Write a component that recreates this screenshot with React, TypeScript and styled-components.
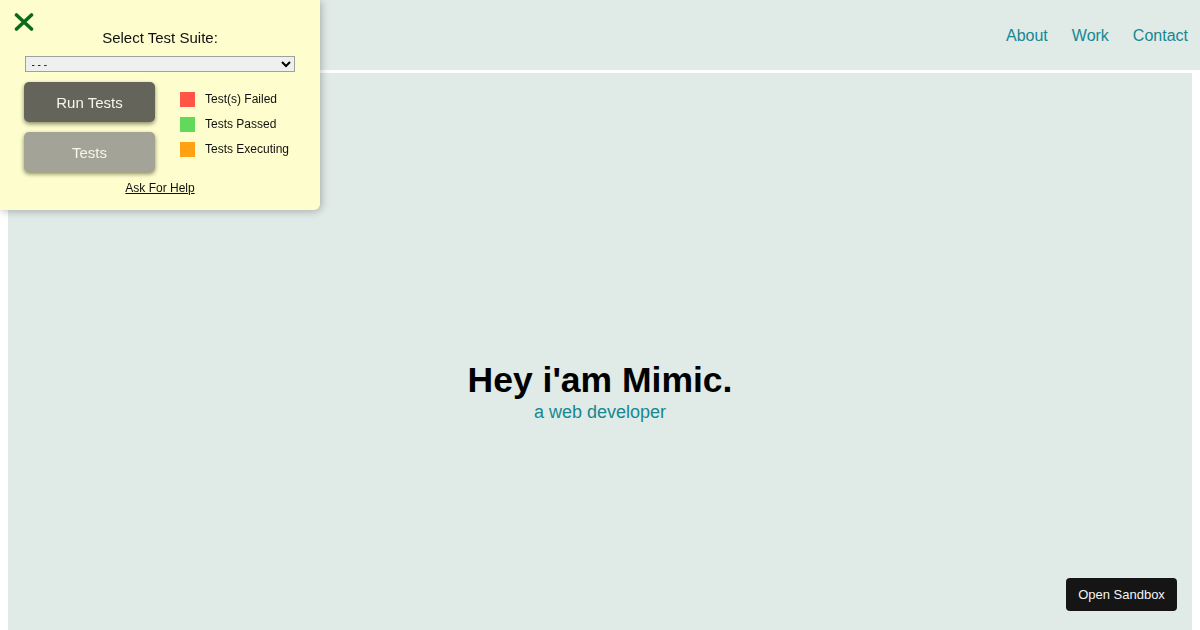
import React from "react"
import styled, { createGlobalStyle } from "styled-components"

const GlobalStyle = createGlobalStyle`
  html, body {
    margin: 0;
    padding: 0;
    background: #ffffff;
    font-family: "Liberation Sans", Arial, sans-serif;
    overflow: hidden;
  }
`

const legend = [
  { label: "Test(s) Failed", color: "#ff5447" },
  { label: "Tests Passed", color: "#62d95b" },
  { label: "Tests Executing", color: "#ffa113" },
]

export default function App() {
  return (
    <>
      <GlobalStyle />
      <StyledHeader>
        <StyledNav>
          <a href="#">About</a>
          <a href="#">Work</a>
          <a href="#">Contact</a>
        </StyledNav>
      </StyledHeader>
      <StyledMain>
        <h1>Hey i'am Mimic.</h1>
        <p>a web developer</p>
      </StyledMain>

      <StyledPanel>
        <StyledClose aria-label="close">
          <svg width="20" height="18" viewBox="0 0 20 18">
            <path d="M2.5 2 L17.5 16 M17.5 2 L2.5 16" stroke="#0c6a1c" strokeWidth="3.6" strokeLinecap="round" />
          </svg>
        </StyledClose>
        <StyledTitle>Select Test Suite:</StyledTitle>
        <StyledSelect defaultValue="none">
          <option value="none">- - -</option>
        </StyledSelect>
        <StyledBody>
          <StyledButtons>
            <StyledButton $dark>Run Tests</StyledButton>
            <StyledButton>Tests</StyledButton>
          </StyledButtons>
          <StyledLegend>
            {legend.map((item) => (
              <li key={item.label}>
                <StyledSwatch $color={item.color} />
                {item.label}
              </li>
            ))}
          </StyledLegend>
        </StyledBody>
        <StyledHelp href="#">Ask For Help</StyledHelp>
      </StyledPanel>

      <StyledSandbox>Open Sandbox</StyledSandbox>
    </>
  )
}

const StyledHeader = styled.header`
  height: 70px;
  box-sizing: border-box;
  padding: 2px 12px 0 0;
  background: #e0eae6;
  display: flex;
  justify-content: flex-end;
  align-items: center;
`

const StyledNav = styled.nav`
  display: flex;
  gap: 24px;
  a {
    color: #168793;
    font-size: 16px;
    text-decoration: none;
  }
`

const StyledMain = styled.main`
  margin: 3px 8px 0;
  height: 630px;
  box-sizing: border-box;
  padding-top: 5px;
  background: #e0eae6;
  display: flex;
  flex-direction: column;
  align-items: center;
  justify-content: center;
  h1 {
    margin: 0;
    font-size: 35.5px;
    line-height: 42px;
    font-weight: bold;
    color: #000;
  }
  p {
    margin: 0;
    font-size: 18px;
    line-height: 22px;
    color: #168793;
  }
`

const StyledPanel = styled.div`
  position: fixed;
  top: 0;
  left: 0;
  width: 320px;
  height: 210px;
  box-sizing: border-box;
  padding: 29px 0 0;
  background: #fdfdcd;
  border-bottom-right-radius: 6px;
  box-shadow: 1px 1px 8px rgba(0, 0, 0, 0.28);
  display: flex;
  flex-direction: column;
  align-items: center;
`

const StyledClose = styled.button`
  position: absolute;
  top: 13px;
  left: 14px;
  padding: 0;
  border: none;
  background: none;
  line-height: 0;
  cursor: pointer;
`

const StyledTitle = styled.div`
  font-size: 15px;
  line-height: 18px;
  color: #111;
`

const StyledSelect = styled.select`
  margin-top: 9px;
  margin-right: 1px;
  width: 270px;
  height: 16px;
  padding: 0 2px;
  font-size: 10px;
  font-family: "Liberation Sans", Arial, sans-serif;
  background: #efefef;
  border: 1px solid #a0a0a0;
  border-radius: 0;
  color: #000;
`

const StyledBody = styled.div`
  margin-top: 10px;
  width: 272px;
  display: flex;
  gap: 25px;
`

const StyledButtons = styled.div`
  display: flex;
  flex-direction: column;
  gap: 10px;
`

const StyledButton = styled.button<{ $dark?: boolean }>`
  width: 131px;
  height: 40px;
  border: none;
  border-radius: 5px;
  background: ${(p) => (p.$dark ? "#65645a" : "#a3a398")};
  color: #f6f6ec;
  font-size: 15px;
  font-family: "Liberation Sans", Arial, sans-serif;
  box-shadow: 0 2px 4px rgba(40, 40, 20, 0.55);
`

const StyledLegend = styled.ul`
  list-style: none;
  margin: 10px 0 0;
  padding: 0;
  display: flex;
  flex-direction: column;
  gap: 10px;
  li {
    display: flex;
    align-items: center;
    gap: 10px;
    font-size: 12px;
    line-height: 15px;
    color: #111;
  }
`

const StyledSwatch = styled.span<{ $color: string }>`
  width: 15px;
  height: 15px;
  background: ${(p) => p.$color};
`

const StyledHelp = styled.a`
  margin-top: 9px;
  font-size: 12px;
  color: #111;
  text-decoration: underline;
`

const StyledSandbox = styled.button`
  position: fixed;
  right: 23px;
  bottom: 19px;
  width: 111px;
  height: 33px;
  border: none;
  border-radius: 4px;
  background: #151515;
  color: #f4f4f4;
  font-size: 13px;
  font-family: "Liberation Sans", Arial, sans-serif;
`
